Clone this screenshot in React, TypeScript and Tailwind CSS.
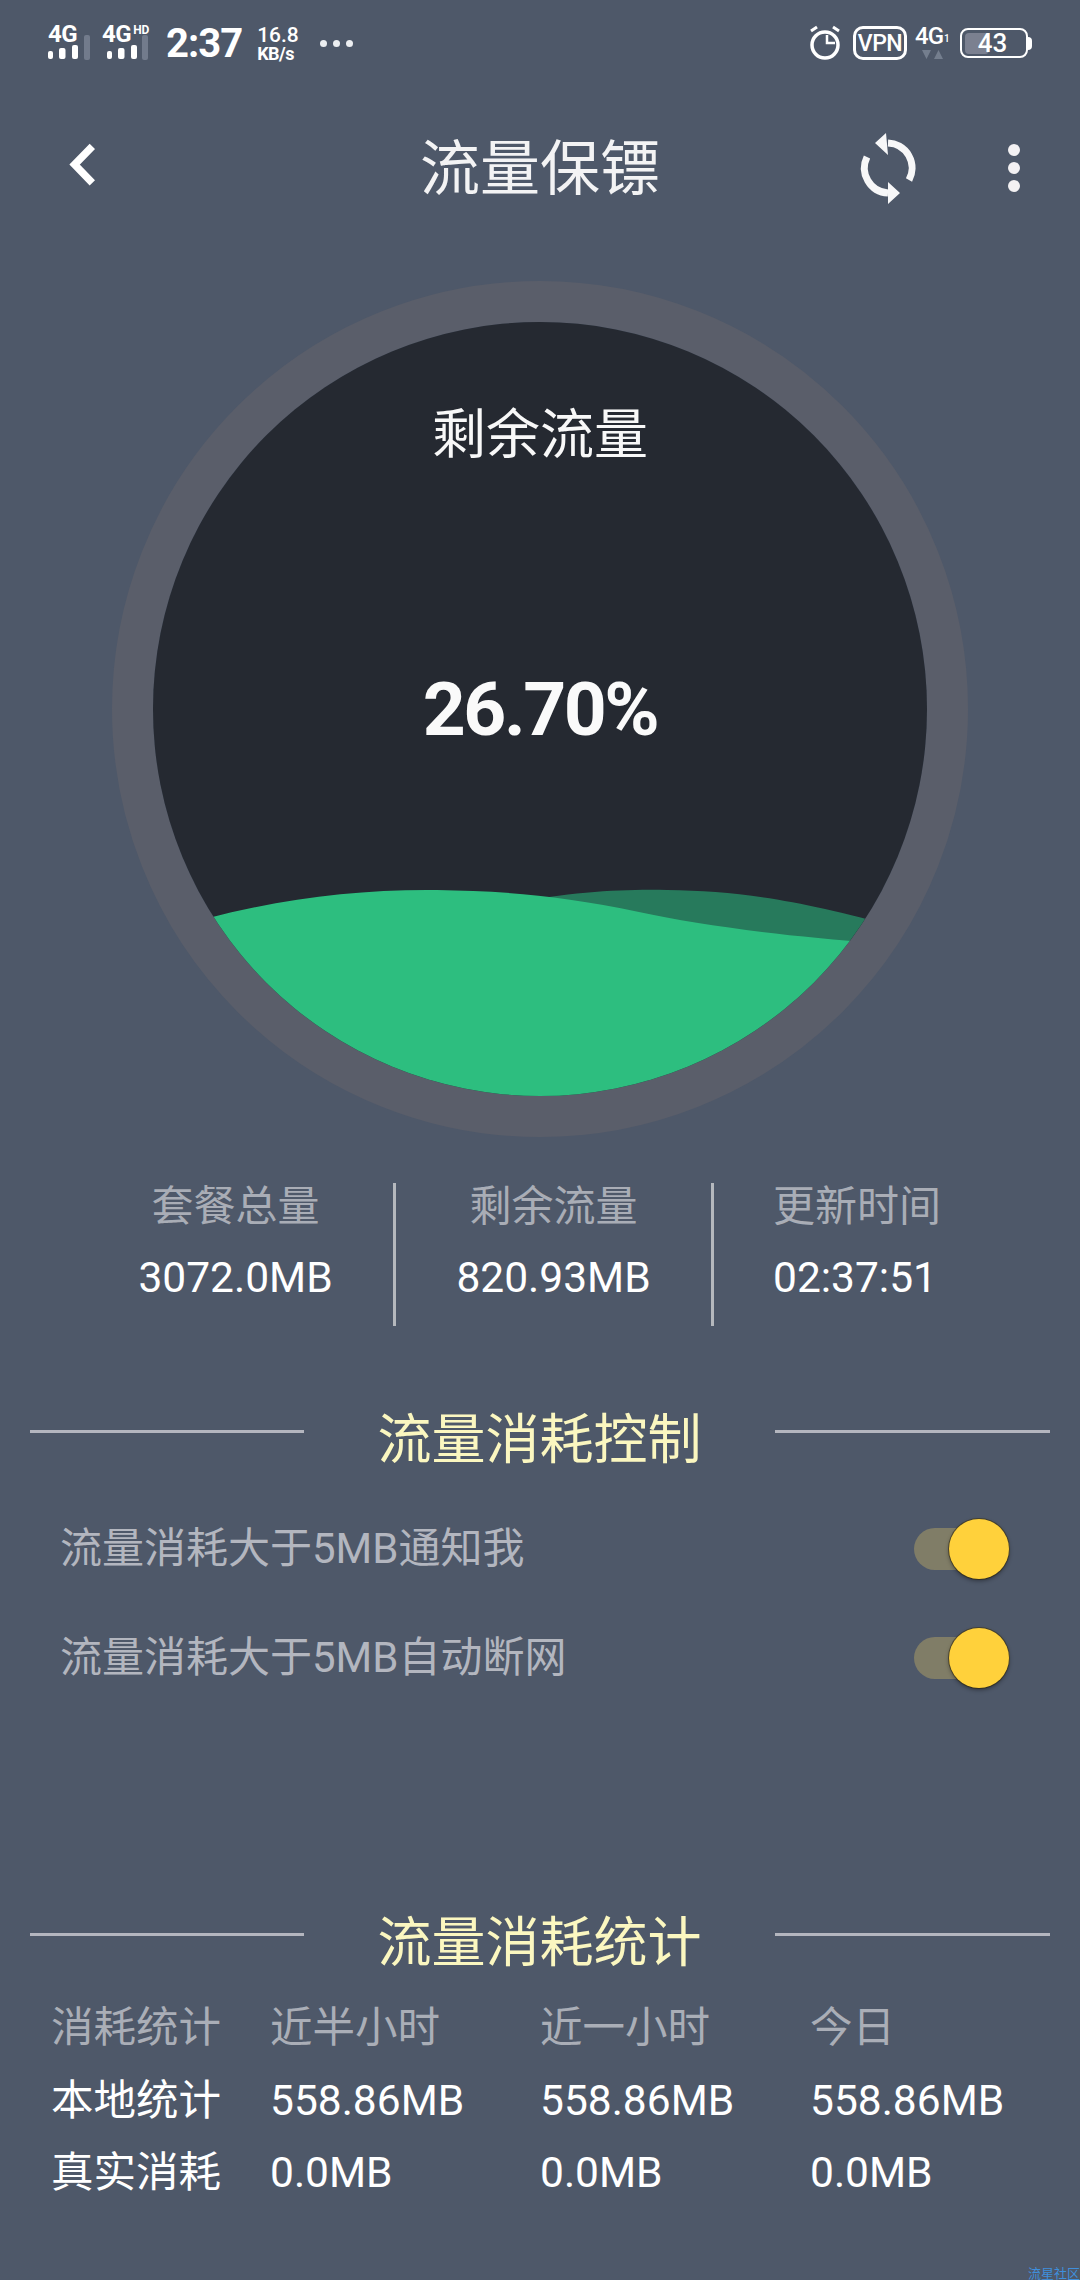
import React from "react";

function Signal({ hd }: { hd?: boolean }) {
  return (
    <div className={hd ? "relative h-[36px] w-[50px]" : "relative h-[36px] w-[42px]"}>
      <div className="flex items-start">
        <span className="text-[24px] font-bold leading-[18px] tracking-[-0.5px] text-white">4G</span>
        {hd && <span className="ml-[2px] text-[12px] font-bold leading-[10px] text-white">HD</span>}
      </div>
      <svg className="absolute left-0 top-0" width="50" height="36" viewBox="0 0 50 36">
        <g fill="#ffffff" transform={hd ? "translate(5 0)" : ""}>
          <rect x="0" y="26" width="5" height="8" rx="2" />
          <rect x="11" y="23" width="6.500" height="11" rx="2" />
          <rect x="24" y="20" width="6" height="14" rx="2" />
          <rect x={hd ? 35 : 36} y="10" width="6" height="25" rx="2" fill="#727b8c" />
        </g>
      </svg>
    </div>
  );
}

function SectionHeading({ title }: { title: string }) {
  return (
    <div className="flex h-[76px] items-center justify-between px-[30px]">
      <div className="mb-[14px] h-[3px] w-[274px] bg-[#b4b6bf]" />
      <span className="pt-[5px] text-[54px] leading-none text-[#fbf7c0]">{title}</span>
      <div className="mb-[14px] h-[3px] w-[275px] bg-[#b4b6bf]" />
    </div>
  );
}

function ToggleRow({ label }: { label: string }) {
  return (
    <div className="flex h-[109px] items-center justify-between pl-[60px] pr-[70px]">
      <span className="text-[42px] leading-none text-[#b3b6bf]">{label}</span>
      <div className="relative h-[42px] w-[96px] rounded-full bg-[#807d67]">
        <div className="absolute left-[35px] top-[-9px] h-[60px] w-[60px] rounded-full bg-[#ffd13b] shadow-[0_2px_4px_rgba(0,0,0,0.4),0_0_0_1px_rgba(70,60,30,0.7)]" />
      </div>
    </div>
  );
}

const rows = [
  { c: "text-[#aaaeb7]", v: ["消耗统计", "近半小时", "近一小时", "今日"] },
  { c: "text-white", v: ["本地统计", "558.86MB", "558.86MB", "558.86MB"] },
  { c: "text-white", v: ["真实消耗", "0.0MB", "0.0MB", "0.0MB"] },
];

export default function App() {
  return (
    <div
      className="relative h-[2280px] w-[1080px] overflow-hidden bg-[#4e5869] text-white"
      style={{ fontFamily: 'Roboto, "Noto Sans CJK SC", sans-serif' }}
    >
      {/* status bar */}
      <div className="flex h-[86px] items-center justify-between pl-[48px] pr-[48px]">
        <div className="flex items-center">
          <Signal />
          <div className="ml-[12px]">
            <Signal hd />
          </div>
          <span className="ml-[14px] mt-[2px] text-[40px] font-bold leading-none tracking-[-1px]">2:37</span>
          <div className="ml-[15px] flex flex-col items-start">
            <span className="text-[21px] font-medium leading-[21px]">16.8</span>
            <span className="text-[18px] font-bold leading-[16px] tracking-[-0.5px]">KB/s</span>
          </div>
          <div className="ml-[21px] flex gap-[6px]">
            <div className="h-[7px] w-[7px] rounded-full bg-[#eceef1]" />
            <div className="h-[7px] w-[7px] rounded-full bg-[#eceef1]" />
            <div className="h-[7px] w-[7px] rounded-full bg-[#eceef1]" />
          </div>
        </div>
        <div className="flex items-center">
          <svg width="32" height="36" viewBox="800 25 32 36" fill="none" stroke="#fff">
            <circle cx="816" cy="45" r="13" strokeWidth="3.5" />
            <path d="M818 35v8h8" strokeWidth="2.5" />
            <path d="M802 31l6-4M830 31l-6-4" strokeWidth="3" />
          </svg>
          <div className="ml-[12px] flex h-[34px] w-[54px] items-center justify-center rounded-[10px] border-[3px] border-white text-[23px] font-medium leading-none tracking-[-0.5px]">
            VPN
          </div>
          <div className="relative ml-[8px] h-[34px] w-[33px]">
            <span className="text-[24px] font-medium leading-[20px] tracking-[-1px]">4G</span>
            <span className="absolute left-[29px] top-[8px] text-[10px] font-medium leading-none">1</span>
            <svg className="absolute left-[7px] top-[24px]" width="21" height="10" viewBox="0 0 21 10" fill="#747e8e">
              <path d="M0 0h9l-4.500 9zM12 9h9l-4.500-9z" />
            </svg>
          </div>
          <div className="ml-[12px] flex items-center">
            <div className="relative flex h-[30px] w-[68px] items-center justify-center rounded-[8px] border-[2.500px] border-white">
              <div className="absolute bottom-[2.500px] left-[2.500px] top-[2.500px] w-[24px] rounded-[4px] bg-[#7b8090]" />
              <span className="relative mr-[3px] text-[26px] font-medium leading-none">43</span>
            </div>
            <div className="h-[13px] w-[4px] rounded-r-full bg-white" />
          </div>
        </div>
      </div>

      {/* nav bar */}
      <div className="relative flex h-[164px] items-center justify-center">
        <span className="pt-[3px] text-[60px] leading-none text-[#f3f3f4]">流量保镖</span>
        <svg className="absolute left-[63px] top-[52px]" width="40" height="56" viewBox="60 138 40 60" fill="none" stroke="#fff" strokeWidth="8">
          <path d="M90 147L71 166.500L90 186" />
        </svg>
        <svg className="absolute left-[856px] top-[40px]" width="64" height="84" viewBox="845 126 64 84" fill="none">
          <path d="M877 143A25 25 0 0 1 898 180" stroke="#f7f7f8" strokeWidth="7" />
          <path d="M877 193A25 25 0 0 1 856 157" stroke="#f7f7f8" strokeWidth="7" />
          <path d="M875 133L864 143L877 155zM877 182L889 193L877 204z" fill="#f7f7f8" />
        </svg>
        <div className="absolute left-[1008px] top-[58px] flex flex-col gap-[6px]">
          <div className="h-[12px] w-[12px] rounded-full bg-[#f3f1f3]" />
          <div className="h-[12px] w-[12px] rounded-full bg-[#f3f1f3]" />
          <div className="h-[12px] w-[12px] rounded-full bg-[#f3f1f3]" />
        </div>
      </div>

      {/* gauge */}
      <div className="mx-auto mt-[31px] box-border h-[856px] w-[856px] rounded-full border-[41px] border-[#5a5e6a]">
        <div className="relative flex h-full w-full flex-col items-center overflow-hidden rounded-full bg-[#252931]">
          <svg className="absolute left-0 top-0" width="774" height="774" viewBox="153 322 774 774">
            <path d="M500 905C570 892 620 889 667 890C740 891 800 900 900 928L900 1000L500 1000Z" fill="#277a5c" />
            <path d="M150 935C250 903 340 889 437 890C500 891 560 895 639 912C700 925 780 936 880 943L880 1110L150 1110Z" fill="#2dbe7f" />
          </svg>
          <span className="relative mt-[87px] text-[54px] leading-none text-[#f8f8f8]">剩余流量</span>
          <span className="relative mt-[209px] text-[75px] font-bold leading-none tracking-[-2.500px] text-[#fafafa]">26.70%</span>
        </div>
      </div>

      {/* summary */}
      <div className="mt-[46px] flex h-[143px] pl-[78px]">
        <div className="flex w-[318px] flex-col items-center border-r-[3px] border-[#b5b8bd] pt-[3px]">
          <span className="text-[42px] leading-[42px] text-[#a9adb6]">套餐总量</span>
          <span className="mt-[29px] text-[42.500px] leading-[42px] text-white">3072.0MB</span>
        </div>
        <div className="flex w-[318px] flex-col items-center border-r-[3px] border-[#b5b8bd] pt-[3px]">
          <span className="text-[42px] leading-[42px] text-[#a9adb6]">剩余流量</span>
          <span className="mt-[29px] text-[42.500px] leading-[42px] text-white">820.93MB</span>
        </div>
        <div className="flex flex-col items-start pl-[59px] pt-[3px]">
          <span className="text-[42px] leading-[42px] text-[#a9adb6]">更新时间</span>
          <span className="mt-[29px] text-[42.500px] leading-[42px] text-white">02:37:51</span>
        </div>
      </div>

      {/* control */}
      <div className="mt-[74px]">
        <SectionHeading title="流量消耗控制" />
      </div>
      <div className="mt-[18px]">
        <ToggleRow label="流量消耗大于5MB通知我" />
        <ToggleRow label="流量消耗大于5MB自动断网" />
      </div>

      {/* stats */}
      <div className="mt-[191px]">
        <SectionHeading title="流量消耗统计" />
      </div>
      <div className="mt-[13px] pl-[51px]">
        {rows.map((r, i) => (
          <div key={i} className={`grid h-[72.500px] grid-cols-[219px_270px_270px_1fr] items-center text-[42.500px] leading-none ${r.c}`}>
            {r.v.map((t, j) => (
              <span key={j}>{t}</span>
            ))}
          </div>
        ))}
      </div>

      <span className="absolute bottom-0 right-0 text-[13px] leading-none text-[#3f8fdc]">流星社区</span>
    </div>
  );
}
